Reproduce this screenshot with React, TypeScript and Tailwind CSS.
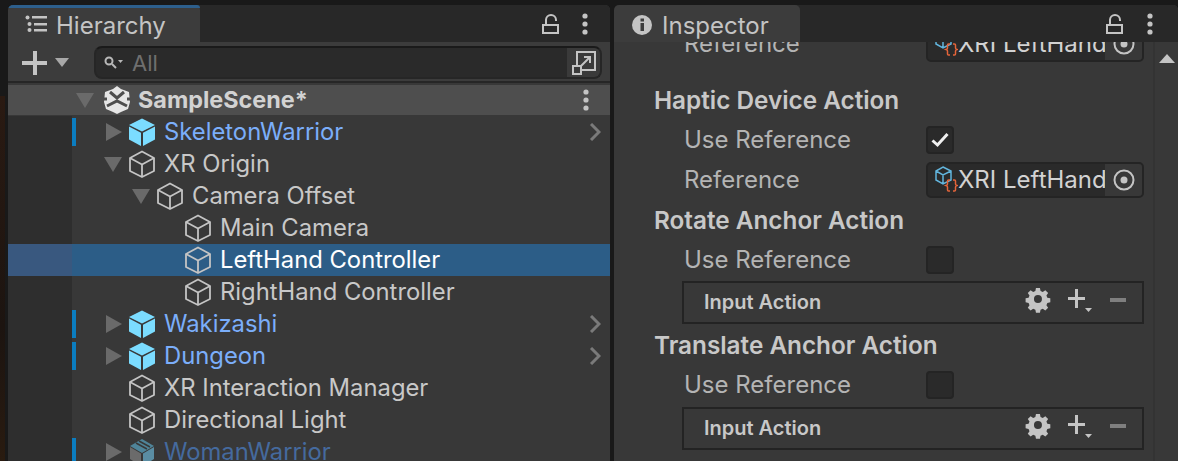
import React from 'react';

const FONT = { fontFamily: 'Inter, sans-serif' };

const Cube = ({ solid, dim }: { solid?: boolean; dim?: boolean }) => {
  if (dim) {
    return (
      <svg width="28" height="28" viewBox="0 0 28 28" className="shrink-0">
        <path d="M14 1 L26 8 L14 15 L2 8 Z" fill="#4f8499" />
        <path d="M2 9 L13 15.5 L13 28 L2 21 Z" fill="#6b6b6b" />
        <path d="M15 15.5 L26 9 L26 21 L15 28 Z" fill="#5a8da3" />
        <path d="M8 5 L19 11 M11 3 L22 9" stroke="#383838" strokeWidth="1.5" />
      </svg>
    );
  }
  if (solid) {
    return (
      <svg width="28" height="28" viewBox="0 0 28 28" className="shrink-0">
        <path d="M14 0.5 L27 7 L14 13.5 L1 7 Z" fill="#7bdcff" />
        <path d="M1 8.5 L13 14.8 L13 28 L1 21.5 Z" fill="#7bdcff" />
        <path d="M15 14.8 L27 8.5 L27 21.5 L15 28 Z" fill="#7bdcff" />
      </svg>
    );
  }
  return (
    <svg width="28" height="28" viewBox="0 0 28 28" fill="none" stroke="#c4c4c4" strokeWidth="1.8" strokeLinejoin="round" className="shrink-0">
      <path d="M14 1.500 L26 8 L26 21 L14 27 L2 21 L2 8 Z" />
      <path d="M2 8 L14 14.5 L26 8 M14 14.5 L14 27" />
    </svg>
  );
};

const Arrow = ({ open }: { open?: boolean }) => (
  <svg width="18" height="18" viewBox="0 0 18 18" className="shrink-0" fill="#6a6a6a">
    {open ? <path d="M0 2 H18 L9 17 Z" /> : <path d="M2 0 L18 9 L2 18 Z" />}
  </svg>
);

const Dots = () => (
  <svg width="8" height="22" viewBox="0 0 8 22" fill="#c4c4c4">
    <circle cx="4" cy="3" r="2.6" />
    <circle cx="4" cy="11" r="2.6" />
    <circle cx="4" cy="19" r="2.6" />
  </svg>
);

const Lock = () => (
  <svg width="18" height="20" viewBox="0 0 18 20" fill="none" stroke="#c4c4c4" strokeWidth="2">
    <rect x="1" y="11" width="15" height="8" />
    <path d="M4 11 V6 a5 5 0 0 1 10 0 V7" />
  </svg>
);

const Gear = () => (
  <svg width="26" height="26" viewBox="0 0 24 24" fill="#c4c4c4">
    <path fillRule="evenodd" d="M10 1 h4 l.6 3 2.2.9 2.6-1.7 2.8 2.8-1.7 2.6.9 2.2 3 .6 v4 l-3 .6-.9 2.2 1.7 2.6-2.8 2.8-2.6-1.7-2.2.9-.6 3 h-4 l-.6-3-2.2-.9-2.6 1.7-2.8-2.8 1.7-2.6-.9-2.2-3-.6 v-4 l3-.6.9-2.2-1.7-2.6 2.8-2.8 2.6 1.7 2.2-.9 Z M12 8 a4 4 0 1 0 0 8 a4 4 0 0 0 0-8 Z" transform="scale(0.92) translate(1 0)" />
  </svg>
);

const AddRemove = () => (
  <div className="mb-[5px] flex items-center">
    <Gear />
    <svg width="26" height="26" viewBox="0 0 26 26" fill="#c4c4c4" className="ml-[16px]">
      <rect x="1" y="10" width="17" height="3" />
      <rect x="8" y="2" width="3" height="19" />
      <path d="M18 21 H25 L21.500 25 Z" />
    </svg>
    <div className="ml-[17px] h-[4px] w-[16px] bg-[#7f7f7f]" />
  </div>
);

const Tab = ({ icon, label, width }: { icon: React.ReactNode; label: string; width: string }) => (
  <div className={`${width} flex h-[37px] items-center rounded-t-[5px] bg-[#3c3c3c]`}>
    {icon}
    <span className="mt-[4px] text-[24px] leading-none text-[#c4c4c4]">{label}</span>
  </div>
);

type RowProps = { indent: string; label: string; arrow?: 'open' | 'closed'; kind?: 'prefab' | 'dim' | 'plain'; selected?: boolean };

const HierarchyRow = ({ indent, label, arrow, kind = 'plain', selected }: RowProps) => {
  const prefab = kind !== 'plain';
  const textColor = selected ? 'text-white' : kind === 'prefab' ? 'text-[#7baefa]' : kind === 'dim' ? 'text-[#456a9e]' : 'text-[#c8c8c8]';
  return (
    <div className={`flex h-[32px] shrink-0 items-center ${selected ? 'bg-[#2c5d87]' : ''}`}>
      <div className={`h-full w-[64px] shrink-0 ${selected ? 'bg-[#39587f]' : 'bg-[#2e2e2e]'}`} />
      <div className={`mb-[1px] h-[28px] w-[4px] shrink-0 ${prefab ? 'bg-[#0b7dc0]' : ''}`} />
      <div className={`flex min-w-0 flex-1 items-center ${indent}`}>
        <div className="flex w-[24px] shrink-0 justify-start">{arrow && <Arrow open={arrow === 'open'} />}</div>
        <Cube solid={kind === 'prefab'} dim={kind === 'dim'} />
        <span className={`ml-[8px] whitespace-nowrap text-[23.8px] leading-none ${textColor}`}>{label}</span>
      </div>
      {kind === 'prefab' && (
        <svg width="12" height="18" viewBox="0 0 12 18" fill="none" stroke="#7a7a7a" strokeWidth="3" className="mr-[9px]">
          <path d="M2 1 L10 9 L2 17" />
        </svg>
      )}
    </div>
  );
};

const Heading = ({ children, className }: { children: string; className: string }) => (
  <div className={`flex items-center pl-[40px] text-[24.3px] font-semibold leading-none text-[#c8c8c8] ${className}`}>{children}</div>
);

const FieldLabel = ({ children }: { children: string }) => (
  <span className="w-[242px] shrink-0 text-[24px] leading-none text-[#b4b4b4]">{children}</span>
);

const ObjectField = () => (
  <div className="flex h-[36px] w-[218px] items-center overflow-hidden rounded-[5px] border-2 border-[#242424] bg-[#2a2a2a]">
    <svg width="24" height="30" viewBox="0 0 24 30" fill="none" className="ml-[6px] shrink-0">
      <path d="M9 2 L17 6 L17 15 L9 19 L2 15 L2 6 Z M2 6 L9 10 L17 6 M9 10 V19" stroke="#62b5dd" strokeWidth="1.5" />
      <path d="M16 13 h-1.500 q-1 0 -1 1 v3 q0 1 -1.500 1.500 q1.500 .5 1.500 1.500 v3 q0 1 1 1 h1.500 M19 13 h1.500 q1 0 1 1 v3 q0 1 1.500 1.500 q-1.500 .5 -1.500 1.500 v3 q0 1 -1 1 h-1.500" stroke="#e4643a" strokeWidth="1.500" transform="translate(0 2)" />
    </svg>
    <span className="min-w-0 flex-1 whitespace-nowrap text-[24px] leading-none text-[#d2d2d2]">XRI LeftHand</span>
    <div className="flex h-full w-[37px] shrink-0 items-center justify-center bg-[#383838]">
      <svg width="22" height="22" viewBox="0 0 22 22" fill="none">
        <circle cx="11" cy="11" r="9.5" stroke="#c4c4c4" strokeWidth="2" />
        <circle cx="11" cy="11" r="3.5" fill="#c4c4c4" />
      </svg>
    </div>
  </div>
);

const Checkbox = ({ checked }: { checked?: boolean }) => (
  <div className="flex h-[28px] w-[28px] items-center justify-center rounded-[4px] border-2 border-[#242424] bg-[#2a2a2a]">
    {checked && (
      <svg width="18" height="16" viewBox="0 0 18 16" fill="none" stroke="#f0f0f0" strokeWidth="3">
        <path d="M1.500 8.500 L6.500 13 L16.500 2" />
      </svg>
    )}
  </div>
);

const InputAction = () => (
  <div className="flex h-[43px] items-center justify-between border-2 border-[#232323] pl-[20px] pr-[16px]">
    <span className="mb-[2px] text-[20px] font-semibold leading-none text-[#c8c8c8]">Input Action</span>
    <AddRemove />
  </div>
);

const FieldRow = ({ label, children }: { label: string; children?: React.ReactNode }) => (
  <div className="flex h-[40px] items-center pl-[70px]">
    <FieldLabel>{label}</FieldLabel>
    {children}
  </div>
);

export default function App() {
  return (
    <div className="flex h-[461px] w-[1178px] overflow-hidden bg-[#191919]" style={FONT}>
      {/* scene view peeking out on the left edge */}
      <div className="mt-[96px] flex h-full w-[8px] shrink-0">
        <div className="h-full w-[5px] bg-gradient-to-b from-[#2a1a12] via-[#1c1410] to-[#33200f]" />
      </div>

      {/* Hierarchy */}
      <div className="mt-[5px] flex w-[602px] shrink-0 flex-col overflow-hidden rounded-t-[5px] bg-[#383838]">
        <div className="flex h-[37px] shrink-0 items-center bg-[#282828]">
          <div className="relative w-[192px]">
            <div className="absolute left-0 right-0 top-0 h-[3px] rounded-t-[5px] bg-[#2d5f8c]" />
            <Tab
              width="w-[192px]"
              label="Hierarchy"
              icon={
                <svg width="22" height="18" viewBox="0 0 22 18" fill="#c4c4c4" className="ml-[17px] mr-[9px]">
                  <circle cx="2.500" cy="2.500" r="2" />
                  <circle cx="4.500" cy="9" r="2" />
                  <circle cx="4.500" cy="15" r="2" />
                  <rect x="7" y="1" width="15" height="2.500" />
                  <rect x="9" y="8" width="13" height="2.500" />
                  <rect x="9" y="14" width="13" height="2.500" />
                </svg>
              }
            />
          </div>
          <div className="ml-auto flex items-center">
            <Lock />
            <div className="ml-[21px] mr-[21px]"><Dots /></div>
          </div>
        </div>

        <div className="flex h-[41px] shrink-0 items-center border-b-2 border-[#262626] bg-[#3c3c3c] pl-[14px] pr-[8px] pt-[2px]">
          <svg width="26" height="26" viewBox="0 0 26 26" fill="#c4c4c4" className="shrink-0">
            <rect x="0" y="11" width="25" height="4" />
            <rect x="11" y="1" width="4" height="24" />
          </svg>
          <svg width="14" height="9" viewBox="0 0 14 9" fill="#a8a8a8" className="ml-[7px] shrink-0">
            <path d="M0 0 H14 L7 9 Z" />
          </svg>
          <div className="ml-[25px] flex h-[33px] flex-1 items-center overflow-hidden rounded-[8px] border-2 border-[#262626] border-t-[#1a1a1a] bg-[#2a2a2a]">
            <svg width="20" height="14" viewBox="0 0 20 14" fill="none" stroke="#b8b8b8" strokeWidth="2" className="ml-[8px] shrink-0">
              <circle cx="5" cy="5" r="3.500" />
              <path d="M8 8 L12 12" />
              <path d="M14 4 H19 L16.500 7 Z" fill="#b8b8b8" stroke="none" />
            </svg>
            <span className="ml-[8px] text-[22px] leading-none text-[#6f6f6f]">All</span>
            <div className="ml-auto flex h-full w-[33px] items-center justify-center bg-[#3a3a3a]">
              <svg width="24" height="24" viewBox="0 0 24 24" fill="none" stroke="#c4c4c4" strokeWidth="2">
                <rect x="5" y="1" width="18" height="18" />
                <rect x="1" y="15" width="8" height="8" fill="#3a3a3a" />
                <path d="M9 15 L18 6 M12 6 H18 V12" />
              </svg>
            </div>
          </div>
        </div>

        <div className="mt-[2px] flex h-[30px] shrink-0 items-center bg-[#4e4e4e] pl-[68px] pr-[20px]">
          <Arrow open />
          <svg width="28" height="28" viewBox="0 0 28 28" className="ml-[9px] shrink-0" fill="#e6e6e6">
            <path d="M14 0 L18 3 L26 6 L27 16 L25 23 L18 26 L14 28 L10 26 L3 23 L1 16 L2 6 L10 3 Z" />
            <path d="M7 6 L14 12 L21 6 M4 20 L14 15 L24 20 M1 13 H4 M24 13 H27" stroke="#4e4e4e" strokeWidth="3" fill="none" />
          </svg>
          <span className="ml-[7px] text-[23.4px] font-bold leading-none text-[#d2d2d2]">SampleScene*</span>
          <div className="ml-auto"><Dots /></div>
        </div>

        <div className="mt-[1px] flex min-h-0 flex-1 flex-col">
          <HierarchyRow indent="pl-[28px]" label="SkeletonWarrior" arrow="closed" kind="prefab" />
          <HierarchyRow indent="pl-[28px]" label="XR Origin" arrow="open" />
          <HierarchyRow indent="pl-[56px]" label="Camera Offset" arrow="open" />
          <HierarchyRow indent="pl-[84px]" label="Main Camera" />
          <HierarchyRow indent="pl-[84px]" label="LeftHand Controller" selected />
          <HierarchyRow indent="pl-[84px]" label="RightHand Controller" />
          <HierarchyRow indent="pl-[28px]" label="Wakizashi" arrow="closed" kind="prefab" />
          <HierarchyRow indent="pl-[28px]" label="Dungeon" arrow="closed" kind="prefab" />
          <HierarchyRow indent="pl-[28px]" label="XR Interaction Manager" />
          <HierarchyRow indent="pl-[28px]" label="Directional Light" />
          <HierarchyRow indent="pl-[28px]" label="WomanWarrior" arrow="closed" kind="dim" />
        </div>
      </div>

      {/* Inspector */}
      <div className="ml-[4px] mt-[5px] flex min-w-0 flex-1 flex-col overflow-hidden rounded-t-[5px] bg-[#383838]">
        <div className="relative z-10 flex h-[37px] shrink-0 items-center bg-[#282828]">
          <Tab
            width="w-[186px]"
            label="Inspector"
            icon={
              <svg width="20" height="20" viewBox="0 0 20 20" className="ml-[18px] mr-[10px] mt-[2px]">
                <circle cx="10" cy="10" r="10" fill="#c4c4c4" />
                <rect x="8.500" y="8" width="3.500" height="8" fill="#3c3c3c" />
                <rect x="8.500" y="3.500" width="3.500" height="3" fill="#3c3c3c" />
              </svg>
            }
          />
          <div className="ml-auto flex items-center">
            <Lock />
            <div className="ml-[22px] mr-[24px]"><Dots /></div>
          </div>
        </div>

        <div className="flex min-h-0 flex-1">
          <div className="min-w-0 flex-1 overflow-hidden pr-[9px]">
            {/* list is scrolled: the first row sits partly under the tab bar */}
            <div className="mt-[-18px] flex flex-col">
              <FieldRow label="Reference">
                <ObjectField />
              </FieldRow>
              <Heading className="mt-[16px] h-[40px]">Haptic Device Action</Heading>
              <FieldRow label="Use Reference"><Checkbox checked /></FieldRow>
              <FieldRow label="Reference"><ObjectField /></FieldRow>
              <Heading className="h-[40px]">Rotate Anchor Action</Heading>
              <FieldRow label="Use Reference"><Checkbox /></FieldRow>
              <div className="ml-[68px] mt-[1px]"><InputAction /></div>
              <Heading className="mt-[1px] h-[40px]">Translate Anchor Action</Heading>
              <FieldRow label="Use Reference"><Checkbox /></FieldRow>
              <div className="ml-[68px] mt-[2px]"><InputAction /></div>
            </div>
          </div>
          <div className="flex w-[25px] shrink-0 justify-center border-l-2 border-[#333333] pt-[12px]">
            <svg width="16" height="9" viewBox="0 0 16 9" fill="#c4c4c4"><path d="M8 0 L16 9 H0 Z" /></svg>
          </div>
        </div>
      </div>
    </div>
  );
}
